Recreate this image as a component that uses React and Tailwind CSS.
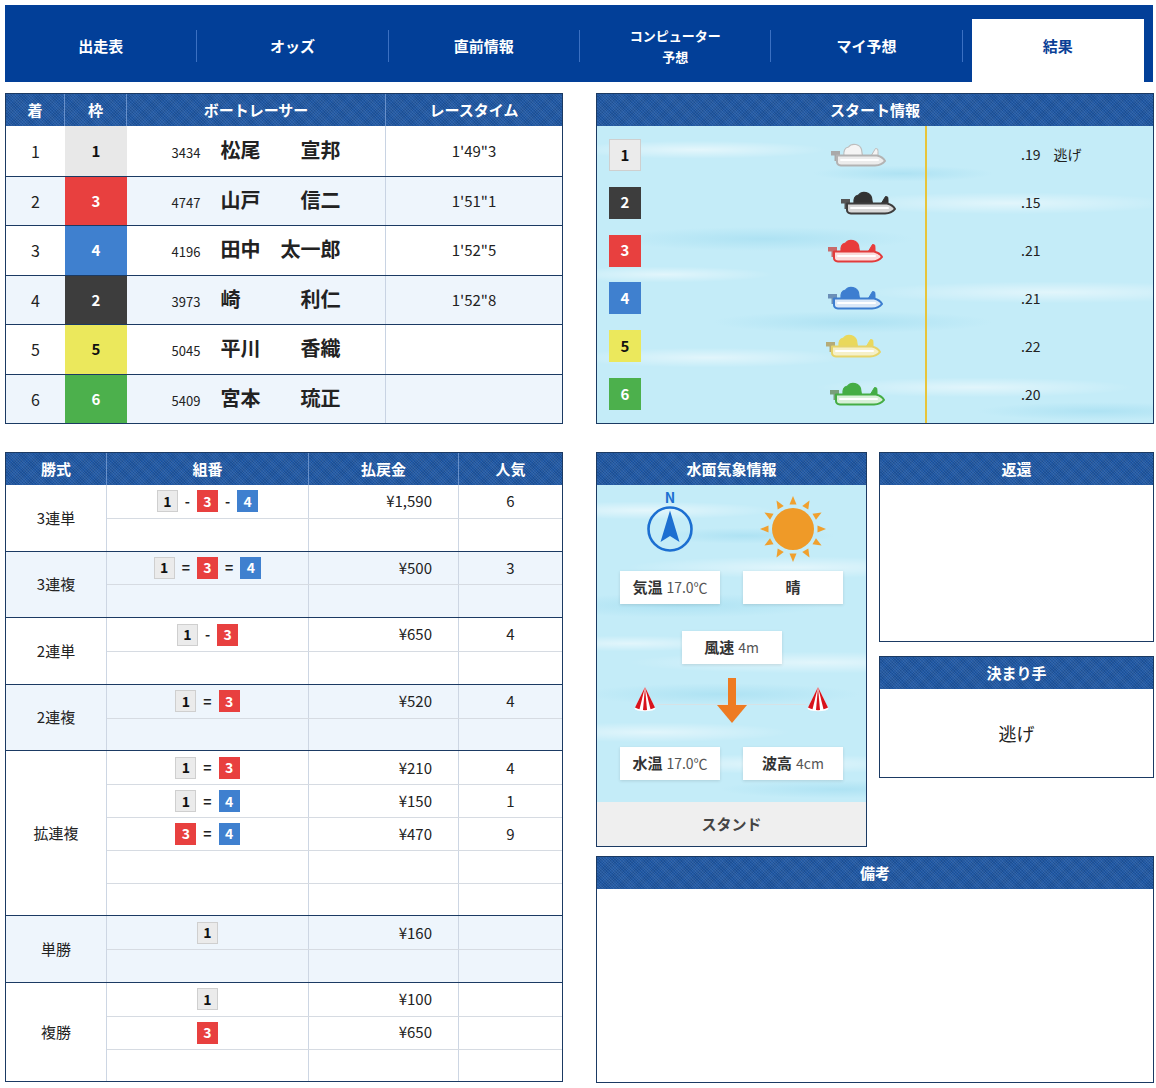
import React from 'react'

const wakuCell = {
  1: 'bg-[#e8e8e8] text-[#111]',
  2: 'bg-[#3d3d3d] text-white',
  3: 'bg-[#e8403f] text-white',
  4: 'bg-[#3f80cf] text-white',
  5: 'bg-[#ebe85c] text-[#111]',
  6: 'bg-[#4cb04c] text-white',
}

const wakuBadge = {
  1: 'bg-[#ebebeb] text-[#111] border border-[#cfcfcf]',
  2: 'bg-[#3d3d3d] text-white',
  3: 'bg-[#e8403f] text-white',
  4: 'bg-[#3f80cf] text-white',
  5: 'bg-[#ebe85c] text-[#111]',
  6: 'bg-[#4cb04c] text-white',
}

const boatColors = {
  1: { rider: '#f4f4f4', riderLine: '#bdbdbd', hull: '#ececec', line: '#b3b3b3', motor: '#a9a9a9' },
  2: { rider: '#333333', riderLine: '#333333', hull: '#d8d8d8', line: '#3e3e3e', motor: '#555555' },
  3: { rider: '#e83c3c', riderLine: '#e83c3c', hull: '#fbdcdc', line: '#e23b3b', motor: '#c86a6a' },
  4: { rider: '#3d7ed0', riderLine: '#3d7ed0', hull: '#dbe8f7', line: '#3d7ed0', motor: '#6b8fb8' },
  5: { rider: '#e9d85c', riderLine: '#e9d85c', hull: '#f6f0c8', line: '#e6d46a', motor: '#b5ab77' },
  6: { rider: '#45ad45', riderLine: '#45ad45', hull: '#d8f0d8', line: '#45ad45', motor: '#7a9f7a' },
}

const tabs = ['出走表', 'オッズ', '直前情報', 'コンピューター予想', 'マイ予想', '結果']

const results = [
  { rank: 1, waku: 1, no: '3434', name: '松尾　　宣邦', time: `1'49"3` },
  { rank: 2, waku: 3, no: '4747', name: '山戸　　信二', time: `1'51"1` },
  { rank: 3, waku: 4, no: '4196', name: '田中　太一郎', time: `1'52"5` },
  { rank: 4, waku: 2, no: '3973', name: '崎　　　利仁', time: `1'52"8` },
  { rank: 5, waku: 5, no: '5045', name: '平川　　香織', time: '' },
  { rank: 6, waku: 6, no: '5409', name: '宮本　　琉正', time: '' },
]

// x = boat left edge inside the start panel
const starts = [
  { waku: 1, st: '.19', note: '逃げ', x: 233 },
  { waku: 2, st: '.15', x: 243 },
  { waku: 3, st: '.21', x: 230 },
  { waku: 4, st: '.21', x: 230 },
  { waku: 5, st: '.22', x: 228 },
  { waku: 6, st: '.20', x: 232 },
]

const payouts = [
  { type: '3連単', rows: [{ combo: [1, '-', 3, '-', 4], pay: '¥1,590', pop: '6' }, {}] },
  { type: '3連複', rows: [{ combo: [1, '=', 3, '=', 4], pay: '¥500', pop: '3' }, {}] },
  { type: '2連単', rows: [{ combo: [1, '-', 3], pay: '¥650', pop: '4' }, {}] },
  { type: '2連複', rows: [{ combo: [1, '=', 3], pay: '¥520', pop: '4' }, {}] },
  {
    type: '拡連複',
    rows: [
      { combo: [1, '=', 3], pay: '¥210', pop: '4' },
      { combo: [1, '=', 4], pay: '¥150', pop: '1' },
      { combo: [3, '=', 4], pay: '¥470', pop: '9' },
      {},
      {},
    ],
  },
  { type: '単勝', rows: [{ combo: [1], pay: '¥160' }, {}] },
  { type: '複勝', rows: [{ combo: [1], pay: '¥100' }, { combo: [3], pay: '¥650' }, {}] },
]

const water =
  'bg-[#c4ecf8] bg-[image:radial-gradient(ellipse_130px_9px_at_18%_8%,rgba(255,255,255,0.55),transparent),radial-gradient(ellipse_90px_8px_at_55%_16%,rgba(160,220,240,0.6),transparent),radial-gradient(ellipse_170px_11px_at_74%_26%,rgba(255,255,255,0.5),transparent),radial-gradient(ellipse_150px_12px_at_30%_38%,rgba(160,220,240,0.6),transparent),radial-gradient(ellipse_110px_8px_at_12%_50%,rgba(255,255,255,0.5),transparent),radial-gradient(ellipse_190px_11px_at_82%_56%,rgba(255,255,255,0.5),transparent),radial-gradient(ellipse_140px_11px_at_46%_66%,rgba(160,220,240,0.6),transparent),radial-gradient(ellipse_140px_10px_at_20%_78%,rgba(255,255,255,0.5),transparent),radial-gradient(ellipse_160px_10px_at_68%_88%,rgba(255,255,255,0.5),transparent),radial-gradient(ellipse_120px_9px_at_90%_96%,rgba(160,220,240,0.6),transparent)]'

function Head({ children }) {
  return (
    <div className="flex h-[32px] items-center justify-center bg-[#1f58a5] bg-[image:repeating-linear-gradient(45deg,rgba(255,255,255,0.08)_0px,rgba(255,255,255,0.08)_1px,transparent_1px,transparent_2px),repeating-linear-gradient(135deg,rgba(0,0,0,0.1)_0px,rgba(0,0,0,0.1)_1px,transparent_1px,transparent_2px)] text-[15px] font-bold text-white">
      {children}
    </div>
  )
}

function Boat({ waku }) {
  const c = boatColors[waku]
  return (
    <svg width="56" height="26" viewBox="0 0 56 26">
      <path d="M1 9h9v4.5H6.5V19H4.5v-5.5H1z" fill={c.motor} />
      <path
        d="M14 14 Q13 6 18.5 5 Q21 1.5 26 2.5 Q30.5 3.5 31.5 7.5 L32.5 14 Z"
        fill={c.rider}
        stroke={c.riderLine}
        strokeWidth="1.2"
      />
      <path d="M41 14 L45.5 6.5 Q48.5 6 48 9.5 L48 14 Z" fill={c.rider} stroke={c.riderLine} strokeWidth="1" />
      <path
        d="M7 13.5 H47 Q53 15 55 19 Q52 23 45 23.5 H11 Q7 23 7 20 Z"
        fill={c.hull}
        stroke={c.line}
        strokeWidth="2"
        strokeLinejoin="round"
      />
      <path d="M11 18 H48" stroke="#fff" strokeWidth="2" strokeLinecap="round" />
    </svg>
  )
}

function Badge({ n }) {
  return (
    <span className={`flex h-[22px] w-[21px] items-center justify-center text-[14px] font-bold ${wakuBadge[n]}`}>{n}</span>
  )
}

function Compass() {
  return (
    <svg width="48" height="48" viewBox="0 0 48 48">
      <circle cx="24" cy="24" r="21.5" fill="none" stroke="#1c6fd1" strokeWidth="2.6" />
      <path d="M24 5.5 L33.5 37 L24 31 L14.5 37 Z" fill="#1c6fd1" />
    </svg>
  )
}

function Sun() {
  const rays = Array.from({ length: 12 }, (_, i) => i * 30)
  return (
    <svg width="70" height="70" viewBox="0 0 70 70">
      {rays.map((a) => (
        <path key={a} d="M35 2 L38.5 10.5 L31.5 10.5 Z" fill="#f0a02e" transform={`rotate(${a} 35 35)`} />
      ))}
      <circle cx="35" cy="35" r="21" fill="#ef9a28" />
    </svg>
  )
}

function Buoy() {
  return (
    <svg width="24" height="26" viewBox="0 0 24 26">
      <ellipse cx="12" cy="22.5" rx="10.5" ry="2.8" fill="#fff" />
      <path d="M12 1 L22 21.5 Q12 25 2 21.5 Z" fill="#fff" />
      <path d="M12 1 L2 21.5 Q4 22.8 6.5 23.3 Z" fill="#d8131b" />
      <path d="M12 1 L10 24 Q12 24.3 14 24 Z" fill="#d8131b" />
      <path d="M12 1 L17.5 23.3 Q20 22.8 22 21.5 Z" fill="#d8131b" />
    </svg>
  )
}

function Arrow() {
  return (
    <svg width="34" height="46" viewBox="0 0 34 46">
      <rect x="13" y="0" width="8" height="28" fill="#ee7b22" />
      <path d="M2 27 H32 L17 45 Z" fill="#ee7b22" />
    </svg>
  )
}

function InfoBox({ label, value }) {
  return (
    <div className="flex h-[33px] w-[100px] items-center justify-center gap-[4px] bg-white shadow-[0_1px_3px_rgba(0,0,0,0.12)]">
      <span className="text-[15px] font-bold text-[#333]">{label}</span>
      {value && <span className="text-[14px] text-[#555]">{value}</span>}
    </div>
  )
}

export default function App() {
  return (
    <div className="w-[1156px] pb-[6px] pl-[5px] pt-[5px] font-['Noto_Sans_CJK_JP','Noto_Sans',sans-serif] text-[#222]">
      <nav className="grid h-[77px] w-[1148px] grid-cols-6 bg-[#023f98]">
        {tabs.map((t, i) => {
          const active = t === '結果'
          return (
            <div key={t} className="flex items-stretch pt-[14px]">
              {i > 0 && <div className="mb-[20px] mt-[11px] w-px bg-[#3b70c2]" />}
              <div
                className={`flex flex-1 items-center justify-center pb-[9px] text-center font-bold ${
                  active ? 'mx-[9px] bg-white text-[#0a3f96]' : 'text-white'
                } ${t.length > 6 ? 'text-[13px] leading-[21px]' : 'text-[15px]'}`}
              >
                {t === 'コンピューター予想' ? (
                  <span>
                    コンピューター
                    <br />
                    予想
                  </span>
                ) : (
                  t
                )}
              </div>
            </div>
          )
        })}
      </nav>

      <div className="mt-[11px] grid w-[1149px] grid-cols-[558px_558px] gap-x-[33px]">
        {/* results */}
        <div className="border border-[#1b3a63]">
          <div className="grid grid-cols-[59px_62px_259px_1fr] bg-[#1f58a5]">
            {['着', '枠', 'ボートレーサー', 'レースタイム'].map((h, i) => (
              <div key={h} className={i < 3 ? 'border-r border-[#6790cb]' : ''}>
                <Head>{h}</Head>
              </div>
            ))}
          </div>
          {results.map((r, i) => (
            <div
              key={r.rank}
              className={`grid h-[49.5px] grid-cols-[59px_62px_259px_1fr] ${i > 0 ? 'border-t border-[#1b3a63]' : ''} ${
                i % 2 ? 'bg-[#eef5fc]' : 'bg-white'
              }`}
            >
              <div className="flex items-center justify-center text-[16px]">{r.rank}</div>
              <div className={`flex items-center justify-center text-[15px] font-bold ${wakuCell[r.waku]}`}>{r.waku}</div>
              <div className="flex items-center justify-center border-r border-[#c8d3e3]">
                <div className="flex items-baseline">
                  <span className="text-[13px]">{r.no}</span>
                  <span className="ml-[20px] text-[20px] font-bold leading-none">{r.name}</span>
                </div>
              </div>
              <div className="flex items-center justify-center text-[15px]">{r.time}</div>
            </div>
          ))}
        </div>

        {/* start info */}
        <div className="border border-[#1b3a63]">
          <Head>スタート情報</Head>
          <div className={`flex h-[297px] ${water}`}>
            <div className="flex w-[330px] flex-col border-r-2 border-[#e8c43a] py-[5px]">
              {starts.map((s) => (
                <div key={s.waku} className="flex flex-1 items-center">
                  <span
                    className={`ml-[12px] flex h-[32px] w-[32px] items-center justify-center text-[15px] font-bold ${wakuBadge[s.waku]}`}
                  >
                    {s.waku}
                  </span>
                  <div style={{ marginLeft: s.x - 44 }}>
                    <Boat waku={s.waku} />
                  </div>
                </div>
              ))}
            </div>
            <div className="flex flex-1 flex-col py-[5px]">
              {starts.map((s) => (
                <div key={s.waku} className="flex flex-1 items-center pl-[94px] text-[14px]">
                  <span>{s.st}</span>
                  {s.note && <span className="ml-[13px]">{s.note}</span>}
                </div>
              ))}
            </div>
          </div>
        </div>

        {/* payouts */}
        <div className="mt-[28px] self-start border border-[#1b3a63]">
          <div className="grid grid-cols-[101px_202px_150px_1fr] bg-[#1f58a5]">
            {['勝式', '組番', '払戻金', '人気'].map((h, i) => (
              <div key={h} className={i < 3 ? 'border-r border-[#6790cb]' : ''}>
                <Head>{h}</Head>
              </div>
            ))}
          </div>
          {payouts.map((g, gi) => (
            <div
              key={g.type}
              className={`flex ${gi > 0 ? 'border-t border-[#1b3a63]' : ''} ${gi % 2 ? 'bg-[#eef5fc]' : 'bg-white'}`}
            >
              <div className="flex w-[101px] items-center justify-center border-r border-[#cdd6e3] text-[15px]">{g.type}</div>
              <div className="flex flex-1 flex-col">
                {g.rows.map((r, ri) => (
                  <div
                    key={ri}
                    className={`grid h-[32.8px] grid-cols-[202px_150px_1fr] ${ri > 0 ? 'border-t border-[#d6dbe2]' : ''}`}
                  >
                    <div className="flex items-center justify-center border-r border-[#cdd6e3]">
                      {r.combo &&
                        r.combo.map((c, ci) =>
                          typeof c === 'number' ? (
                            <Badge key={ci} n={c} />
                          ) : (
                            <span key={ci} className="mx-[7px] text-[14px] font-bold">
                              {c}
                            </span>
                          )
                        )}
                    </div>
                    <div className="flex items-center justify-end border-r border-[#cdd6e3] pr-[26px] text-[15px]">{r.pay}</div>
                    <div className="flex items-center justify-center text-[15px]">{r.pop}</div>
                  </div>
                ))}
              </div>
            </div>
          ))}
        </div>

        {/* right bottom */}
        <div className="mt-[28px] flex flex-col">
          <div className="grid grid-cols-[271px_275px] gap-x-[12px]">
            <div className="border border-[#1b3a63]">
              <Head>水面気象情報</Head>
              <div className={`relative h-[317px] ${water}`}>
                <div className="grid h-[86px] grid-cols-[100px_100px] gap-x-[23px] px-[23px]">
                  <div className="flex flex-col items-center pt-[5px]">
                    <span className="h-[15px] text-[14px] font-bold leading-[15px] text-[#1c6fd1]">N</span>
                    <Compass />
                  </div>
                  <div className="flex justify-center pt-[9px]">
                    <Sun />
                  </div>
                </div>
                <div className="flex gap-x-[23px] px-[23px]">
                  <InfoBox label="気温" value="17.0℃" />
                  <InfoBox label="晴" />
                </div>
                <div className="mt-[27px] flex justify-center">
                  <InfoBox label="風速" value="4m" />
                </div>
                <div className="relative flex h-[83px] px-[36px]">
                  <div className="mt-[22px]">
                    <Buoy />
                  </div>
                  <div className="mt-[40px] h-px flex-1 bg-[#d6e2e6]" />
                  <div className="mt-[22px]">
                    <Buoy />
                  </div>
                  <div className="absolute left-1/2 top-[14px] -translate-x-1/2">
                    <Arrow />
                  </div>
                </div>
                <div className="flex gap-x-[23px] px-[23px]">
                  <InfoBox label="水温" value="17.0℃" />
                  <InfoBox label="波高" value="4cm" />
                </div>
              </div>
              <div className="flex h-[44px] items-center justify-center bg-[#efefef] text-[15px] font-bold text-[#444]">スタンド</div>
            </div>

            <div className="flex flex-col">
              <div className="border border-[#1b3a63]">
                <Head>返還</Head>
                <div className="h-[156px] bg-white" />
              </div>
              <div className="mt-[14px] border border-[#1b3a63]">
                <Head>決まり手</Head>
                <div className="flex h-[88px] items-center justify-center bg-white text-[18px]">逃げ</div>
              </div>
            </div>
          </div>

          <div className="mt-[9px] border border-[#1b3a63]">
            <Head>備考</Head>
            <div className="h-[193px] bg-white" />
          </div>
        </div>
      </div>
    </div>
  )
}
